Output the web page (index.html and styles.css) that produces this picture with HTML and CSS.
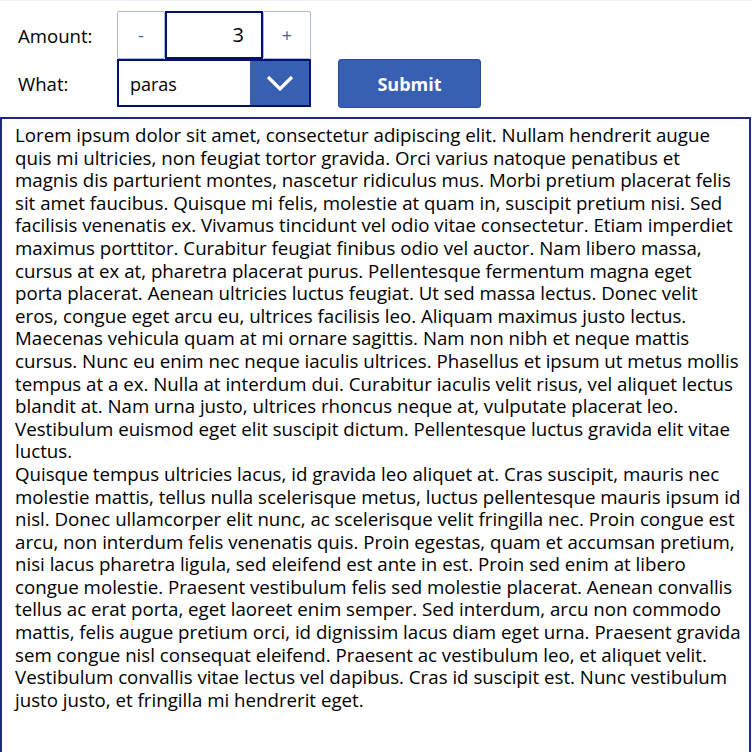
FILE: index.html
```html
<!DOCTYPE html>
<html>
<head>
<meta charset="utf-8">
<link rel="stylesheet" href="styles.css">
</head>
<body>
<div class="top-strip"></div>
<div class="controls">
  <div class="row row-amount">
    <span class="label">Amount:</span>
    <div class="stepper">
      <button class="step-btn">-</button>
      <div class="number">3</div>
      <button class="step-btn">+</button>
    </div>
  </div>
  <div class="row row-what">
    <span class="label">What:</span>
    <div class="dropdown">
      <span class="dd-value">paras</span>
      <span class="dd-chevron"><svg width="28" height="18" viewBox="0 0 28 18"><polyline points="2,3 14,15 26,3" fill="none" stroke="#fff" stroke-width="3.2"/></svg></span>
    </div>
    <button class="submit">Submit</button>
  </div>
</div>
<div class="textbox">Lorem ipsum dolor sit amet, consectetur adipiscing elit. Nullam hendrerit augue
quis mi ultricies, non feugiat tortor gravida. Orci varius natoque penatibus et
magnis dis parturient montes, nascetur ridiculus mus. Morbi pretium placerat felis
sit amet faucibus. Quisque mi felis, molestie at quam in, suscipit pretium nisi. Sed
facilisis venenatis ex. Vivamus tincidunt vel odio vitae consectetur. Etiam imperdiet
maximus porttitor. Curabitur feugiat finibus odio vel auctor. Nam libero massa,
cursus at ex at, pharetra placerat purus. Pellentesque fermentum magna eget
porta placerat. Aenean ultricies luctus feugiat. Ut sed massa lectus. Donec velit
eros, congue eget arcu eu, ultrices facilisis leo. Aliquam maximus justo lectus.
Maecenas vehicula quam at mi ornare sagittis. Nam non nibh et neque mattis
cursus. Nunc eu enim nec neque iaculis ultrices. Phasellus et ipsum ut metus mollis
tempus at a ex. Nulla at interdum dui. Curabitur iaculis velit risus, vel aliquet lectus
blandit at. Nam urna justo, ultrices rhoncus neque at, vulputate placerat leo.
Vestibulum euismod eget elit suscipit dictum. Pellentesque luctus gravida elit vitae
luctus.
Quisque tempus ultricies lacus, id gravida leo aliquet at. Cras suscipit, mauris nec
molestie mattis, tellus nulla scelerisque metus, luctus pellentesque mauris ipsum id
nisl. Donec ullamcorper elit nunc, ac scelerisque velit fringilla nec. Proin congue est
arcu, non interdum felis venenatis quis. Proin egestas, quam et accumsan pretium,
nisi lacus pharetra ligula, sed eleifend est ante in est. Proin sed enim at libero
congue molestie. Praesent vestibulum felis sed molestie placerat. Aenean convallis
tellus ac erat porta, eget laoreet enim semper. Sed interdum, arcu non commodo
mattis, felis augue pretium orci, id dignissim lacus diam eget urna. Praesent gravida
sem congue nisl consequat eleifend. Praesent ac vestibulum leo, et aliquet velit.
Vestibulum convallis vitae lectus vel dapibus. Cras id suscipit est. Nunc vestibulum
justo justo, et fringilla mi hendrerit eget.</div>
</body>
</html>
```
FILE: styles.css
```css
html, body {
  margin: 0;
  padding: 0;
  background: #fff;
  font-family: "Open Sans", "Liberation Sans", sans-serif;
  color: #000;
  overflow: hidden;
  height: 752px;
}
.top-strip {
  height: 1px;
  background: #f2f2f2;
}
.controls {
  padding: 10px 0 0 0;
  height: 106px;
}
.row {
  display: flex;
  align-items: center;
  height: 48px;
}
.label {
  width: 117px;
  padding-left: 18px;
  box-sizing: border-box;
  font-size: 18.6px;
  align-self: center;
}
.stepper {
  display: flex;
  height: 48px;
}
.step-btn {
  width: 48px;
  height: 48px;
  border: 1px solid #a9b9e2;
  border-radius: 2px;
  background: #fff;
  color: #3860b2;
  font-family: "Open Sans", sans-serif;
  font-size: 18px;
  padding: 0;
  margin: 0;
}
.number {
  width: 98px;
  height: 48px;
  box-sizing: border-box;
  border: 2px solid #00126b;
  text-align: right;
  padding-right: 17px;
  font-size: 20px;
  line-height: 44px;
}
.row-what {
  align-items: stretch;
}
.dropdown {
  width: 194px;
  height: 48px;
  box-sizing: border-box;
  border: 2px solid #00126b;
  display: flex;
}
.dd-value {
  flex: 1;
  padding-left: 11px;
  font-size: 18px;
  line-height: 46px;
}
.dd-chevron {
  width: 59px;
  background: #3860b2;
  display: flex;
  align-items: center;
  justify-content: center;
}
.submit {
  margin-left: 27px;
  width: 143px;
  height: 49px;
  background: #3860b2;
  border: 1px solid #2a4d99;
  border-radius: 3px;
  color: #fff;
  font-family: "Open Sans", sans-serif;
  font-weight: 700;
  font-size: 18px;
  padding: 0;
}
.textbox {
  height: 660px;
  width: 751px;
  box-sizing: border-box;
  border: 2px solid #1c2a86;
  padding: 5px 0 0 13px;
  font-size: 18.7px;
  line-height: 22.6px;
  white-space: pre;
  overflow: hidden;
}
```
